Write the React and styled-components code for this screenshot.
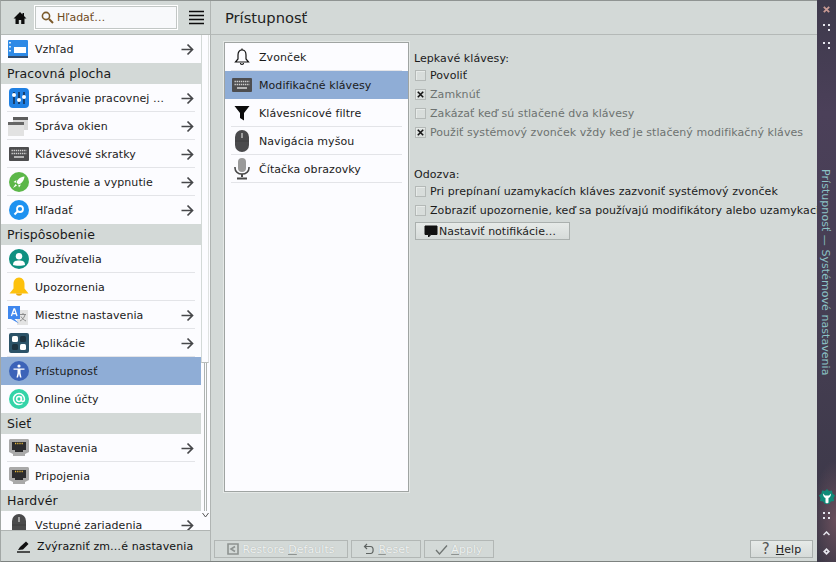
import React from 'react';
import styled, { createGlobalStyle } from 'styled-components';

const GlobalStyle = createGlobalStyle`
  html, body {
    margin: 0;
    padding: 0;
    background: #d3d9d7;
  }
  * { box-sizing: border-box; }
`;

const Window = styled.div`
  width: 836px;
  height: 562px;
  display: flex;
  overflow: hidden;
  font-family: 'DejaVu Sans', sans-serif;
  font-size: 11px;
  color: #111;
  background: #d3d9d7;
`;

const Shell = styled.div`
  width: 817px;
  height: 562px;
  display: flex;
  border-top: 1px solid #8f9492;
  border-left: 1px solid #a2a7a5;
  border-bottom: 1px solid #7d8280;
`;

const Sidebar = styled.aside`
  width: 210px;
  flex: none;
  display: flex;
  flex-direction: column;
  border-right: 1px solid #b0b5b3;
`;

const SearchBar = styled.div`
  height: 34px;
  flex: none;
  display: flex;
  align-items: center;
  padding: 0 5px 0 12px;
  border-bottom: 1px solid #b4b9b7;
`;

const SearchField = styled.div`
  width: 144px;
  height: 25px;
  margin-left: 7px;
  display: flex;
  align-items: center;
  gap: 3px;
  padding-left: 6px;
  background: #f8f9fb;
  border: 1px solid #fff;
  box-shadow: inset 0 0 0 1px #c2c7c5;
  color: #6f4a1c;
`;

const MenuButton = styled.div`
  margin-left: 11px;
  line-height: 0;
`;

const ListArea = styled.div`
  flex: 1;
  min-height: 0;
  display: flex;
  overflow: hidden;
`;

const List = styled.div`
  width: 200px;
  flex: none;
  background: #fcfcff;
  overflow: hidden;
`;

const Section = styled.div`
  height: 21px;
  line-height: 22px;
  padding-left: 6px;
  background: #d3d9d7;
  font-size: 12.5px;
  letter-spacing: 0.08px;
  color: #1a1a1a;
`;

const Row = styled.div`
  position: relative;
  height: 28px;
  flex: none;
  display: flex;
  align-items: center;
  padding: 0 7px 0 7px;
  background: ${p => (p.$active ? '#8fadd6' : 'transparent')};

  &::after {
    content: '';
    display: ${p => (p.$line ? 'block' : 'none')};
    position: absolute;
    left: 6px;
    right: 6px;
    bottom: 0;
    height: 1px;
    background: #e3e4e8;
  }
`;

const IconSlot = styled.span`
  width: 21px;
  height: 22px;
  flex: none;
  display: flex;
  align-items: center;
  justify-content: center;
  margin-right: 6px;
`;

const RowLabel = styled.span`
  flex: 1;
  white-space: nowrap;
  letter-spacing: 0.07px;
  color: #1b1b1b;
`;

const Scrollbar = styled.div`
  width: 9px;
  height: 495px;
  flex: none;
  display: flex;
  flex-direction: column;
  background: #fcfcff;
`;

const Thumb = styled.div`
  height: 328px;
  flex: none;
  width: 8px;
  background: #fcfcff;
  border-left: 1px solid #d3d9d7;
  border-right: 1px solid #dfe2e1;
  border-bottom: 1px solid #b8bdbb;
`;

const Track = styled.div`
  flex: 1;
  margin-left: 3px;
  width: 3px;
  border-left: 1px solid #aeb3b1;
  border-right: 1px solid #aeb3b1;
  background: #fcfcff;
`;

const ScrollArrow = styled.div`
  height: 19px;
  flex: none;
  padding: 1px 0 0 1px;
  line-height: 0;
`;

const HighlightBar = styled.div`
  height: 31px;
  flex: none;
  display: flex;
  align-items: center;
  padding-left: 16px;
  gap: 6px;
  border-top: 1px solid #b0b5b3;
  letter-spacing: 0.1px;
`;

const Main = styled.main`
  flex: 1;
  min-width: 0;
  display: flex;
  flex-direction: column;
  overflow: hidden;
`;

const PageHeader = styled.header`
  height: 34px;
  flex: none;
  display: flex;
  align-items: center;
  padding-left: 14px;
  font-size: 14.67px;
  color: #222;
  border-bottom: 1px solid #b4b9b7;
`;

const Content = styled.div`
  flex: 1;
  min-height: 0;
  display: flex;
  padding: 7px 0 0 13px;
`;

const SubList = styled.div`
  width: 185px;
  height: 450px;
  flex: none;
  background: #fcfcff;
  border: 1px solid #9fa4a2;
  box-shadow: 0 0 0 1px #e4e8e6;
`;

const SubRow = styled(Row)`
  padding-left: 6px;
`;

const SubIcon = styled.span`
  width: 22px;
  height: 24px;
  flex: none;
  display: flex;
  align-items: center;
  justify-content: center;
  margin-right: 6px;
`;

const Options = styled.div`
  flex: 1;
  min-width: 0;
  padding: 8px 0 0 5px;
  white-space: nowrap;
  overflow: hidden;
  letter-spacing: 0.06px;
`;

const GroupTitle = styled.div`
  height: 16px;
  line-height: 17px;
  margin-top: ${p => p.$gap || 0}px;
  color: #1b1b1b;
`;

const CheckRow = styled.div`
  height: 19px;
  display: flex;
  align-items: center;
  gap: 4px;
  color: ${p => (p.$disabled ? '#6d7270' : '#1b1b1b')};
`;

const CheckBox = styled.span`
  width: 11px;
  height: 11px;
  flex: none;
  margin-left: 1px;
  display: flex;
  align-items: center;
  justify-content: center;
  background: #d8dddb;
  border: 1px solid #b4b9b7;
  box-shadow: inset 1px 1px 0 #e7ebe9;
  line-height: 0;
`;

const Button = styled.div`
  height: 18px;
  width: ${p => p.$width}px;
  flex: none;
  display: flex;
  align-items: center;
  justify-content: center;
  gap: 3px;
  border: 1px solid ${p => (p.$disabled ? '#b2b7b5' : '#aab0ae')};
  background: ${p => (p.$disabled ? '#d3d9d7' : 'linear-gradient(#e6eae8, #d6dbd9)')};
  color: ${p => (p.$disabled ? '#eef1f0' : '#222')};
  text-shadow: ${p => (p.$disabled ? '0 0 1px #a4a9a7' : 'none')};
  letter-spacing: 0.06px;
  white-space: nowrap;

  u {
    text-decoration-color: ${p => (p.$disabled ? '#8e9391' : 'currentColor')};
  }
`;

const NotifyButton = styled(Button)`
  margin: 2px 0 0 1px;
  justify-content: flex-start;
  padding-left: 8px;
  gap: 1px;
  letter-spacing: 0;
`;

const Footer = styled.footer`
  height: 20px;
  flex: none;
  margin-bottom: 2px;
  display: flex;
  align-items: center;
  gap: 3px;
  padding: 0 4px 0 3px;
`;

const FooterSpacer = styled.div`
  flex: 1;
`;

const TitleBar = styled.div`
  width: 19px;
  flex: none;
  height: 562px;
  display: flex;
  flex-direction: column;
  align-items: center;
  justify-content: space-between;
  background:
    radial-gradient(ellipse 24px 60px at 100% 520px, #6a4f5c, transparent),
    linear-gradient(#3e3a4c, #4b4059 20%, #453e52 60%, #3a3746);
`;

const BarGroup = styled.div`
  display: flex;
  flex-direction: column;
  align-items: center;
  padding: ${p => p.$pad};
  gap: ${p => p.$gap}px;
  line-height: 0;
`;

const BadgeSlot = styled.span`
  margin-bottom: -5px;
  line-height: 0;
`;

const BarTitle = styled.div`
  writing-mode: vertical-rl;
  white-space: nowrap;
  font-size: 11px;
  letter-spacing: 0.05px;
  line-height: 14px;
  color: #8cc3c6;
  margin: 6px 3px 0 0;
`;

const Svg = ({ size = 16, h, children }) => (
  <svg width={size} height={h || size} viewBox={`0 0 ${size} ${h || size}`}>{children}</svg>
);

const HomeIcon = () => (
  <Svg size={14}>
    <path d="M7 1 0.5 7.5H2.5V13H5.8V9H8.2V13H11.5V7.5H13.5L11 5V2H9.5V3.5Z" fill="#0c0c0c" />
  </Svg>
);

const SearchIcon = () => (
  <Svg size={13}>
    <circle cx="5" cy="5" r="3.6" fill="none" stroke="#7b5a2a" strokeWidth="1.6" />
    <path d="M8 8 12 12" stroke="#7b5a2a" strokeWidth="2" />
  </Svg>
);

const HamburgerIcon = () => (
  <Svg size={15}>
    <path d="M0 1.5H15M0 5.5H15M0 9.5H15M0 13.5H15" stroke="#0c0c0c" strokeWidth="1.6" />
  </Svg>
);

const ArrowIcon = () => (
  <Svg size={13}>
    <path d="M0.5 6.5H11M6.5 1.5 11.5 6.5 6.5 11.5" fill="none" stroke="#46474a" strokeWidth="1.7" />
  </Svg>
);

const AppearanceIcon = () => (
  <Svg size={21} h={19}>
    <rect x="0" y="0" width="20" height="18" rx="1" fill="#2e8ae6" />
    <rect x="0" y="16" width="20" height="2" fill="#2f4a6b" />
    <rect x="6" y="7" width="12" height="6" fill="#fff" />
    <path d="M2 2V3.5M2 6V7.5M2 10V11.5" stroke="#fff" strokeWidth="1.6" />
  </Svg>
);

const SlidersIcon = () => (
  <Svg size={20}>
    <rect width="20" height="20" rx="4" fill="#1f80e3" />
    <path d="M5 4V16M10 4V16M15 4V16" stroke="#13253f" strokeWidth="1.4" />
    <circle cx="5" cy="7" r="2" fill="#fff" />
    <circle cx="10" cy="12" r="2" fill="#fff" />
    <circle cx="15" cy="9" r="2" fill="#fff" />
  </Svg>
);

const WindowsIcon = () => (
  <Svg size={21}>
    <rect x="5" y="1" width="15" height="13" fill="#d9d9d9" />
    <rect x="5" y="1" width="15" height="3" fill="#5d5d5d" />
    <rect x="0" y="6" width="16" height="14" fill="#e2e2e2" />
    <rect x="0" y="6" width="16" height="3" fill="#666" />
  </Svg>
);

const KeyboardIcon = () => (
  <Svg size={20} h={14}>
    <rect width="20" height="14" rx="1" fill="#4d4d4f" />
    <path d="M2.5 3.5H17.5M2.5 6.5H17.5" stroke="#cfcfcf" strokeWidth="1.4" strokeDasharray="1.4 0.7" />
    <path d="M5 10H15" stroke="#cfcfcf" strokeWidth="1.6" />
  </Svg>
);

const RocketIcon = () => (
  <Svg size={20}>
    <circle cx="10" cy="10" r="10" fill="#5cb749" />
    <path d="M15.5 4.5C11 5 8.5 7.5 7.5 10.5L9.5 12.5C12.5 11.5 15 9 15.5 4.5ZM7.5 8 4.5 10 6.8 10.8ZM12 12.5 10 15.5 9.2 13.2ZM6.5 12 4 16 8 13.5Z" fill="#fff" />
  </Svg>
);

const FindIcon = () => (
  <Svg size={20}>
    <circle cx="10" cy="10" r="10" fill="#1e92f0" />
    <circle cx="11" cy="9" r="3" fill="none" stroke="#fff" strokeWidth="1.8" />
    <path d="M9 11 5.5 14.5" stroke="#fff" strokeWidth="2" />
  </Svg>
);

const UserIcon = () => (
  <Svg size={20}>
    <circle cx="10" cy="10" r="10" fill="#0f9080" />
    <circle cx="10" cy="7.2" r="3.2" fill="#fff" />
    <path d="M4 16C4 12 7 11.5 10 11.5S16 12 16 16C14 17 6 17 4 16Z" fill="#fff" />
  </Svg>
);

const BellColorIcon = () => (
  <Svg size={20}>
    <path d="M10 0.5C6.5 0.5 4.5 3.5 4.5 7V11.5L0.5 16.5H19.5L15.5 11.5V7C15.5 3.5 13.5 0.5 10 0.5Z" fill="#fdc10d" />
    <path d="M7 16.5H13C13 19.5 7 19.5 7 16.5Z" fill="#e9a608" />
  </Svg>
);

const LocaleIcon = () => (
  <Svg size={21}>
    <rect x="9" y="5" width="11" height="15" fill="#e3e3e3" />
    <path d="M12 9.5H18M15 8V10M17 10C16 13 14 15 12 16M13 11.5C14 13.5 16 15 18 16" fill="none" stroke="#8c8c8c" strokeWidth="1" />
    <path d="M0 1H12V14H6.5L11 18.5 3 14H0Z" fill="#3f87ee" />
    <path d="M3.4 11 6 4H6.6L9 11M4.4 8.6H8" fill="none" stroke="#fff" strokeWidth="1.3" />
  </Svg>
);

const AppsIcon = () => (
  <Svg size={20}>
    <rect width="20" height="20" rx="2" fill="#2c5368" />
    <rect x="3" y="3" width="6" height="6" rx="1.5" fill="#fff" />
    <rect x="11" y="3" width="6" height="6" rx="1.5" fill="#1d3340" />
    <rect x="3" y="11" width="6" height="6" rx="1.5" fill="#1d3340" />
    <rect x="11" y="11" width="6" height="6" rx="1.5" fill="#fff" />
  </Svg>
);

const AccessIcon = () => (
  <Svg size={20}>
    <circle cx="10" cy="10" r="10" fill="#3c63b8" />
    <circle cx="10" cy="5" r="1.6" fill="#fff" />
    <path d="M4.5 7.6H15.5V8.8H11.5V12L12.5 16.5H11L10 12.8 9 16.5H7.5L8.5 12V8.8H4.5Z" fill="#fff" />
  </Svg>
);

const OnlineIcon = () => (
  <Svg size={20}>
    <circle cx="10" cy="10" r="10" fill="#34d4a8" />
    <circle cx="10" cy="10" r="2.4" fill="none" stroke="#fff" strokeWidth="1.5" />
    <path d="M12.4 7.5V11C12.4 13 15.5 13 15.5 10.5 15.5 7 13 4.5 10 4.5S4.5 7 4.5 10 7 15.5 10 15.5C11.5 15.5 12.5 15.2 13.5 14.5" fill="none" stroke="#fff" strokeWidth="1.5" />
  </Svg>
);

const NetworkIcon = () => (
  <Svg size={20} h={18}>
    <path d="M0 1.5C0 .6.6 0 1.5 0H18.5C19.4 0 20 .6 20 1.5V13L16 15V17H4V15L0 13Z" fill="#a9a9a9" />
    <path d="M3 3H17V11H14V13H6V11H3Z" fill="#2c2c2e" />
    <path d="M6 4.5H14" stroke="#e8b93a" strokeWidth="1.4" strokeDasharray="1 0.8" />
  </Svg>
);

const MouseIcon = () => (
  <Svg size={16} h={24}>
    <rect x="1" y="1" width="14" height="22" rx="7" fill="#4a4a4c" />
    <path d="M8 4V9" stroke="#b5b5b5" strokeWidth="1.6" />
    <path d="M1 12H15" stroke="#3a3a3a" strokeWidth="0.8" />
  </Svg>
);

const PenIcon = () => (
  <Svg size={14}>
    <path d="M1 11 3 8 9 2.5 11.5 5 6 10.5Z" fill="#111" />
    <path d="M0 13H13" stroke="#111" strokeWidth="1.4" />
  </Svg>
);

const BellOutlineIcon = () => (
  <Svg size={16} h={18}>
    <path d="M8 2C5.5 2 4 4 4 7V11L1.5 14H14.5L12 11V7C12 4 10.5 2 8 2Z" fill="none" stroke="#111" strokeWidth="1.2" />
    <path d="M6.5 15C6.5 17 9.5 17 9.5 15" fill="none" stroke="#111" strokeWidth="1.2" />
    <path d="M8 .5V2" stroke="#111" strokeWidth="1.2" />
  </Svg>
);

const FunnelIcon = () => (
  <Svg size={16} h={16}>
    <path d="M0.5 1H15.5L10 8V15.5L6 13V8Z" fill="#0c0c0c" />
  </Svg>
);

const MicIcon = () => (
  <Svg size={18} h={22}>
    <rect x="5" y="0" width="8" height="14" rx="4" fill="#9a9a9a" />
    <path d="M2 9V10C2 13.5 5 16 9 16S16 13.5 16 10V9" fill="none" stroke="#4a4a4a" strokeWidth="1.6" />
    <path d="M9 16V19M4 20.5H14" stroke="#4a4a4a" strokeWidth="2" />
  </Svg>
);

const ChatIcon = () => (
  <Svg size={14} h={13}>
    <path d="M1 1H13V9.5H7L4.5 12V9.5H1Z" fill="#111" stroke="#111" strokeLinejoin="round" />
  </Svg>
);

const RestoreIcon = () => (
  <Svg size={12}>
    <path d="M1 1H11V11H1Z" fill="none" stroke="#8e9391" strokeWidth="1.6" />
    <path d="M8 3.5 4 6 8 8.5" fill="none" stroke="#8e9391" strokeWidth="1.6" />
  </Svg>
);

const ResetIcon = () => (
  <Svg size={13}>
    <path d="M3 3.5H8.5C12 3.5 12 10.5 8.5 10.5H4M5 1 2.5 3.5 5 6" fill="none" stroke="#5f6462" strokeWidth="1.2" />
  </Svg>
);

const CheckIcon = () => (
  <Svg size={13}>
    <path d="M1 7 4.5 11 12 2.5" fill="none" stroke="#6f7472" strokeWidth="1.3" />
  </Svg>
);

const QuestionMark = styled.span`
  font-size: 15px;
  color: #555;
  line-height: 1;
  margin-right: 3px;
`;

const CrossMark = () => (
  <Svg size={7}>
    <path d="M.8.8 6.2 6.2M6.2.8.8 6.2" stroke="#151515" strokeWidth="1.6" />
  </Svg>
);

const DownArrow = () => (
  <Svg size={7} h={6}>
    <path d="M.5 1 3.5 5 6.5 1" fill="none" stroke="#555" strokeWidth="1" />
  </Svg>
);

const DotsIcon = ({ three }) => (
  <Svg size={7} h={7}>
    <rect x="0" y="0" width="2" height="2" fill="#e6e6ee" />
    <rect x="5" y="0" width="2" height="2" fill="#e6e6ee" />
    <rect x="5" y="5" width="2" height="2" fill="#e6e6ee" />
    {!three && <rect x="0" y="5" width="2" height="2" fill="#e6e6ee" />}
  </Svg>
);

const WrenchBadge = () => (
  <Svg size={16}>
    <path d="M8 0 10 2 13 1.5 13.5 4.5 16 6.5 14.5 9 15 12 12 12.5 10 15H6L4 12.5 1 12 1.5 9 0 6.5 2.5 4.5 3 1.5 6 2Z" fill="#0f8a78" />
    <path d="M4 4.5C4 7 5 8.5 6.5 9V13.5C6.5 14.6 9.5 14.6 9.5 13.5V9C11 8.5 12 7 12 4.5L10 6.5H6Z" fill="#fff" />
  </Svg>
);

const sections = [
  { items: [{ icon: <AppearanceIcon />, label: 'Vzhľad', more: true }] },
  {
    title: 'Pracovná plocha',
    items: [
      { icon: <SlidersIcon />, label: 'Správanie pracovnej …', more: true },
      { icon: <WindowsIcon />, label: 'Správa okien', more: true },
      { icon: <KeyboardIcon />, label: 'Klávesové skratky', more: true },
      { icon: <RocketIcon />, label: 'Spustenie a vypnutie', more: true },
      { icon: <FindIcon />, label: 'Hľadať', more: true },
    ],
  },
  {
    title: 'Prispôsobenie',
    items: [
      { icon: <UserIcon />, label: 'Používatelia' },
      { icon: <BellColorIcon />, label: 'Upozornenia' },
      { icon: <LocaleIcon />, label: 'Miestne nastavenia', more: true },
      { icon: <AppsIcon />, label: 'Aplikácie', more: true },
      { icon: <AccessIcon />, label: 'Prístupnosť', active: true },
      { icon: <OnlineIcon />, label: 'Online účty' },
    ],
  },
  {
    title: 'Sieť',
    items: [
      { icon: <NetworkIcon />, label: 'Nastavenia', more: true },
      { icon: <NetworkIcon />, label: 'Pripojenia' },
    ],
  },
  {
    title: 'Hardvér',
    items: [{ icon: <MouseIcon />, label: 'Vstupné zariadenia', more: true }],
  },
];

const subItems = [
  { icon: <BellOutlineIcon />, label: 'Zvonček' },
  { icon: <KeyboardIcon />, label: 'Modifikačné klávesy', active: true },
  { icon: <FunnelIcon />, label: 'Klávesnicové filtre' },
  { icon: <MouseIcon />, label: 'Navigácia myšou' },
  { icon: <MicIcon />, label: 'Čítačka obrazovky' },
];

const CheckOption = ({ checked, disabled, children }) => (
  <CheckRow $disabled={disabled}>
    <CheckBox>{checked && <CrossMark />}</CheckBox>
    {children}
  </CheckRow>
);

export default function App() {
  return (
    <>
      <GlobalStyle />
      <Window>
        <Shell>
          <Sidebar>
            <SearchBar>
              <HomeIcon />
              <SearchField>
                <SearchIcon />
                Hľadať…
              </SearchField>
              <MenuButton><HamburgerIcon /></MenuButton>
            </SearchBar>
            <ListArea>
              <List>
                {sections.map((section, i) => (
                  <div key={i}>
                    {section.title && <Section>{section.title}</Section>}
                    {section.items.map((item, j) => (
                      <Row key={item.label} $active={item.active} $line={j < section.items.length - 1 && !item.active}>
                        <IconSlot>{item.icon}</IconSlot>
                        <RowLabel>{item.label}</RowLabel>
                        {item.more && <ArrowIcon />}
                      </Row>
                    ))}
                  </div>
                ))}
              </List>
              <Scrollbar>
                <Thumb />
                <Track />
                <ScrollArrow><DownArrow /></ScrollArrow>
              </Scrollbar>
            </ListArea>
            <HighlightBar>
              <PenIcon />
              Zvýrazniť zm…é nastavenia
            </HighlightBar>
          </Sidebar>
          <Main>
            <PageHeader>Prístupnosť</PageHeader>
            <Content>
              <SubList>
                {subItems.map(item => (
                  <SubRow key={item.label} $active={item.active} $line={!item.active}>
                    <SubIcon>{item.icon}</SubIcon>
                    <RowLabel>{item.label}</RowLabel>
                  </SubRow>
                ))}
              </SubList>
              <Options>
                <GroupTitle>Lepkavé klávesy:</GroupTitle>
                <CheckOption>Povoliť</CheckOption>
                <CheckOption checked disabled>Zamknúť</CheckOption>
                <CheckOption disabled>Zakázať keď sú stlačené dva klávesy</CheckOption>
                <CheckOption checked disabled>Použiť systémový zvonček vždy keď je stlačený modifikačný kláves</CheckOption>
                <GroupTitle $gap={24}>Odozva:</GroupTitle>
                <CheckOption>Pri prepínaní uzamykacích kláves zazvoniť systémový zvonček</CheckOption>
                <CheckOption>Zobraziť upozornenie, keď sa používajú modifikátory alebo uzamykacie klávesy</CheckOption>
                <NotifyButton $width={155}>
                  <ChatIcon />
                  Nastaviť notifikácie…
                </NotifyButton>
              </Options>
            </Content>
            <Footer>
              <Button $disabled $width={134}>
                <RestoreIcon />
                <span>Restore <u>D</u>efaults</span>
              </Button>
              <Button $disabled $width={70}>
                <ResetIcon />
                <span><u>R</u>eset</span>
              </Button>
              <Button $disabled $width={70}>
                <CheckIcon />
                <span><u>A</u>pply</span>
              </Button>
              <FooterSpacer />
              <Button $width={63}>
                <QuestionMark>?</QuestionMark>
                <span><u>H</u>elp</span>
              </Button>
            </Footer>
          </Main>
        </Shell>
        <TitleBar>
          <BarGroup $pad="6px 0 0" $gap={11}>
            <Svg size={7}>
              <path d="M.8.8 6.2 6.2M6.2.8.8 6.2" stroke="#c99a94" strokeWidth="1.8" />
            </Svg>
            <DotsIcon three />
            <DotsIcon three />
          </BarGroup>
          <BarTitle>Prístupnosť — Systémové nastavenia</BarTitle>
          <BarGroup $pad="0 0 7px" $gap={12}>
            <BadgeSlot><WrenchBadge /></BadgeSlot>
            <DotsIcon />
            <Svg size={7} h={5}><path d="M.5 4 3.5 1 6.5 4" fill="none" stroke="#e6e6ee" strokeWidth="1.5" /></Svg>
            <Svg size={7}><path d="M3.5 0 7 3.5 3.5 7 0 3.5ZM3.5 2.5 2.5 3.5 3.5 4.5 4.5 3.5Z" fill="#e6e6ee" /></Svg>
          </BarGroup>
        </TitleBar>
      </Window>
    </>
  );
}
